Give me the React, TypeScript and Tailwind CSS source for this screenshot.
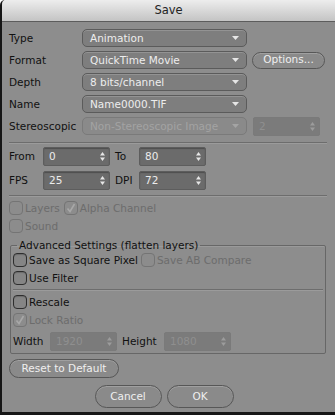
import React from "react"

const font = { fontFamily: '"DejaVu Sans", Verdana, sans-serif' }

function Arrow({ dim }: { dim?: boolean }) {
    return (
        <svg width="7" height="4" viewBox="0 0 7 4" className="shrink-0">
            <path d="M0 0H7L3.5 4Z" fill={dim ? "#a4a4a4" : "#e6e6e6"} />
        </svg>
    )
}

function Steps({ dim }: { dim?: boolean }) {
    const c = dim ? "#9c9c9c" : "#e6e6e6"
    return (
        <svg width="5" height="9" viewBox="0 0 5 9" className="shrink-0">
            <path d="M0 3.5H5L2.5 0Z" fill={c} />
            <path d="M0 5.5H5L2.5 9Z" fill={c} />
        </svg>
    )
}

function Select({ value, disabled }: { value: string; disabled?: boolean }) {
    return (
        <div
            className={`flex items-center w-[165px] h-[18px] rounded-[5px] border pl-[7px] pr-[7px] ${
                disabled
                    ? "border-[#7a7a7a] bg-[#8a8a8a] text-[#a3a3a3]"
                    : "border-[#5b5b5b] bg-[#7e7e7e] text-[#ededed] shadow-[inset_0_1px_0_#939393]"
            }`}
        >
            <span className="flex-1 leading-none">{value}</span>
            <Arrow dim={disabled} />
        </div>
    )
}

function Spin({ value, w = "w-[67px]", disabled }: { value: string; w?: string; disabled?: boolean }) {
    return (
        <div
            className={`flex items-center ${w} h-[19px] rounded-[2px] border pl-[5px] pr-[4px] ${
                disabled
                    ? "border-[#7a7a7a] bg-[#7b7b7b] text-[#8f8f8f]"
                    : "border-[#5d5d5d] bg-[#6b6b6b] text-[#ececec] shadow-[inset_0_1px_1px_#4e4e4e]"
            }`}
        >
            <span className="flex-1 leading-none">{value}</span>
            <Steps dim={disabled} />
        </div>
    )
}

function Check({ label, checked, disabled, gap = "ml-[2px]" }: { label: string; checked?: boolean; disabled?: boolean; gap?: string }) {
    return (
        <div className="flex items-center h-[16px]">
            <div
                className={`flex items-center justify-center w-[14px] h-[14px] rounded-[4px] border ${
                    disabled ? "border-[#747474] bg-[#8c8c8c]" : "border-[#2e2e2e] bg-[#858585] shadow-[inset_0_1px_1px_#6b6b6b]"
                }`}
            >
                {checked && (
                    <svg width="10" height="10" viewBox="0 0 10 10">
                        <path d="M1.5 5.5L4 8.5L8.5 1" stroke={disabled ? "#a8a8a8" : "#222"} strokeWidth="1.6" fill="none" />
                    </svg>
                )}
            </div>
            <span className={`${gap} leading-none ${disabled ? "text-[#6c6c6c]" : "text-[#111]"}`}>{label}</span>
        </div>
    )
}

function Btn({ label, w, h = "h-[19px]" }: { label: string; w: string; h?: string }) {
    return (
        <div
            className={`flex items-center justify-center ${w} ${h} rounded-full border border-[#575757] bg-[#8a8a8a] text-[#efefef] shadow-[inset_0_1px_0_#a0a0a0]`}
        >
            {label}
        </div>
    )
}

function Line() {
    return <div className="h-px bg-[#6d6d6d] shadow-[0_1px_0_#9b9b9b]" />
}

function Row({ label, children }: { label: string; children: React.ReactNode }) {
    return (
        <div className="flex items-center h-[18px]">
            <span className="w-[73px] text-[#111] leading-none">{label}</span>
            {children}
        </div>
    )
}

export default function App() {
    return (
        <div
            className="w-[335px] h-[415px] flex flex-col overflow-hidden rounded-tl-[5px] border-l-2 border-b-[3px] border-[#161616] bg-[#8d8d8d] text-[10.5px]"
            style={font}
        >
            <div className="h-[22px] shrink-0 flex items-center justify-center border-b border-[#5c5c5c] bg-gradient-to-b from-[#ededed] to-[#c4c4c4]">
                <span className="text-[11.5px] text-[#222] pt-px">Save</span>
            </div>

            <div className="flex flex-col pl-[7px] pr-[8px] pt-[7px]">
                <div className="flex flex-col gap-[4px]">
                    <Row label="Type">
                        <Select value="Animation" />
                    </Row>
                    <Row label="Format">
                        <Select value="QuickTime Movie" />
                        <div className="ml-[5px]">
                            <Btn label="Options..." w="w-[73px]" h="h-[17px]" />
                        </div>
                    </Row>
                    <Row label="Depth">
                        <Select value="8 bits/channel" />
                    </Row>
                    <Row label="Name">
                        <Select value="Name0000.TIF" />
                    </Row>
                    <Row label="Stereoscopic">
                        <Select value="Non-Stereoscopic Image" disabled />
                        <div className="ml-[6px]">
                            <Spin value="2" disabled />
                        </div>
                    </Row>
                </div>

                <div className="mt-[7px]">
                    <Line />
                </div>

                <div className="flex flex-col gap-[5px] mt-[4px]">
                    <div className="flex items-center">
                        <span className="w-[34px] text-[#111]">From</span>
                        <Spin value="0" />
                        <span className="w-[29px] pl-[5px] text-[#111]">To</span>
                        <Spin value="80" />
                    </div>
                    <div className="flex items-center">
                        <span className="w-[34px] text-[#111]">FPS</span>
                        <Spin value="25" />
                        <span className="w-[29px] pl-[5px] text-[#111]">DPI</span>
                        <Spin value="72" />
                    </div>
                </div>

                <div className="mt-[5px]">
                    <Line />
                </div>

                <div className="flex flex-col gap-[2px] mt-[4px]">
                    <div className="flex items-center gap-[4px]">
                        <Check label="Layers" disabled />
                        <Check label="Alpha Channel" checked disabled />
                    </div>
                    <Check label="Sound" disabled />
                </div>

                <fieldset className="ml-[1px] mt-[5px] w-[316px] border border-[#676767] rounded-[2px] pl-[2px] pr-[2px] pb-[2px] shadow-[inset_0_1px_0_#9a9a9a]">
                    <legend className="ml-[4px] px-[2px] text-[#111] leading-[13px]">Advanced Settings (flatten layers)</legend>
                    <div className="flex flex-col gap-[2px]">
                        <div className="flex items-center gap-[3px]">
                            <Check label="Save as Square Pixel" />
                            <Check label="Save AB Compare" disabled />
                        </div>
                        <Check label="Use Filter" />
                    </div>
                    <div className="mt-[3px] mb-[4px]">
                        <Line />
                    </div>
                    <div className="flex flex-col gap-[2px]">
                        <Check label="Rescale" />
                        <Check label="Lock Ratio" checked disabled />
                    </div>
                    <div className="flex items-center mt-[4px]">
                        <span className="w-[37px] text-[#111]">Width</span>
                        <Spin value="1920" disabled />
                        <span className="w-[47px] pl-[5px] text-[#111]">Height</span>
                        <Spin value="1080" disabled />
                    </div>
                </fieldset>

                <div className="mt-[5px]">
                    <Btn label="Reset to Default" w="w-[110px]" />
                </div>

                <div className="flex justify-center gap-[5px] mt-[7px] pr-[8px]">
                    <Btn label="Cancel" w="w-[67px]" h="h-[23px]" />
                    <Btn label="OK" w="w-[67px]" h="h-[23px]" />
                </div>
            </div>
        </div>
    )
}
